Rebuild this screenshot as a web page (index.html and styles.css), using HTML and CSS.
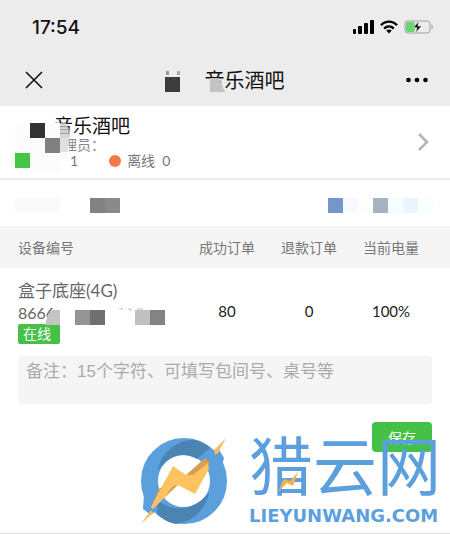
FILE: index.html
```html
<!DOCTYPE html>
<html lang="zh-CN">
<head>
    <meta charset="UTF-8">
    <meta name="viewport" content="width=device-width, initial-scale=1.0">
    <title>音乐酒吧</title>
    <link rel="stylesheet" href="styles.css">
</head>
<body>
    <header class="top">
        <div class="status-bar">
            <span class="time">17:54</span>
            <div class="status-icons">
                <svg width="22" height="14" viewBox="0 0 22 14">
                    <rect x="1" y="9" width="3" height="5" rx="1"/>
                    <rect x="6" y="6" width="4" height="8" rx="1"/>
                    <rect x="12" y="3" width="4" height="11" rx="1"/>
                    <rect x="18" y="0" width="4" height="14" rx="1"/>
                </svg>
                <svg width="18" height="14" viewBox="0 0 18 14">
                    <g fill="none" stroke="#000" stroke-width="2.4">
                        <path d="M1 5.2C5.5.4 12.5.4 17 5.2"/>
                        <path d="M4.2 8.6c2.8-2.8 6.8-2.8 9.6 0"/>
                    </g>
                    <path d="M6.3 10.6c1.6-1.4 3.8-1.4 5.4 0L9 13.6z"/>
                </svg>
                <svg width="30" height="14" viewBox="0 0 30 14">
                    <rect x="1" y="1" width="25" height="12" rx="3" fill="none" stroke="#a0a0a0"/>
                    <rect x="2" y="2" width="9" height="10" rx="2" fill="#6bd66f"/>
                    <path d="M27.5 4.5c1.7.7 1.7 4.300 0 5z" fill="#a0a0a0"/>
                    <path d="M15 1L9.500 7.700h3.600L11.500 13l6-6.900h-3.700z" stroke="#ececec" stroke-width=".6"/>
                </svg>
            </div>
        </div>
        <nav class="nav-bar">
            <button class="icon-btn" aria-label="关闭">
                <svg width="18" height="18" viewBox="0 0 18 18"><path d="M1 1l16 16M17 1L1 17" fill="none" stroke="#111" stroke-width="1.6"/></svg>
            </button>
            <h1>音乐酒吧
                <svg class="mosaic mosaic-nav" width="60" height="24" viewBox="0 0 60 24">
                    <rect x="1" y="2" width="3" height="4" fill="#999"/>
                    <rect x="12" y="2" width="3" height="4" fill="#aaa"/>
                    <rect x="0" y="8" width="15" height="15" fill="#3c3c3c"/>
                    <path d="M38 10h7v13h-7z" fill="#ececec"/>
                    <path d="M45 9h9l6 14H45z" fill="#c3c3c3"/>
                </svg>
            </h1>
            <button class="icon-btn" aria-label="更多">
                <svg width="22" height="6" viewBox="0 0 22 6"><circle cx="2.500" cy="3" r="2.300"/><circle cx="11" cy="3" r="2.300"/><circle cx="19.500" cy="3" r="2.300"/></svg>
            </button>
        </nav>
    </header>

    <main>
        <section class="venue">
            <div class="venue-info">
                <h2>音乐酒吧</h2>
                <p class="manager">管理员：</p>
                <p class="counts">
                    <span class="online">1</span>
                    <span class="dot"></span>
                    <span>离线&nbsp; 0</span>
                </p>
                <svg class="mosaic mosaic-venue" width="62" height="55" viewBox="0 0 62 55">
                    <path d="M0 7h45v15h8v9h1v13h-9v11H0z" fill="#fcfcfc"/>
                    <path d="M45 7h6l4 8v7H45z" fill="#ccc" opacity=".8"/>
                    <rect x="15" y="7" width="15" height="15" fill="#333"/>
                    <rect x="30" y="22" width="15" height="15" fill="#808080"/>
                    <rect x="45" y="22" width="8" height="14" fill="#e0e0e0"/>
                    <rect x="0" y="37" width="15" height="15" fill="#45c645"/>
                </svg>
            </div>
            <svg width="12" height="18" viewBox="0 0 12 18"><path d="M2 1l8 8-8 8" fill="none" stroke="#b5b5b5" stroke-width="2.500"/></svg>
        </section>

        <section class="hidden-row">
            <svg width="105" height="16" viewBox="0 0 105 16">
                <rect x="0" y="0" width="45" height="15" fill="#fafafa"/>
                <rect x="75" y="0" width="15" height="15" fill="#828282"/>
                <rect x="90" y="0" width="15" height="15" fill="#8a8a8a"/>
            </svg>
            <svg width="105" height="16" viewBox="0 0 105 16">
                <rect x="0" y="0" width="15" height="15" fill="#7397c6"/>
                <rect x="15" y="0" width="15" height="15" fill="#f8f8ff"/>
                <rect x="30" y="0" width="15" height="15" fill="#fcfffa"/>
                <rect x="45" y="0" width="15" height="15" fill="#a6b1c2"/>
                <rect x="60" y="0" width="15" height="15" fill="#f3feff"/>
                <rect x="75" y="0" width="15" height="15" fill="#e8f7ff"/>
                <rect x="90" y="0" width="15" height="15" fill="#f9fffd"/>
            </svg>
        </section>

        <table class="devices">
            <thead>
                <tr>
                    <th>设备编号</th>
                    <th>成功订单</th>
                    <th>退款订单</th>
                    <th>当前电量</th>
                </tr>
            </thead>
            <tbody>
                <tr>
                    <td>
                        <div class="device">
                            <div class="device-name">盒子底座(4G)</div>
                            <div class="device-id">8666</div>
                            <span class="badge">在线</span>
                            <svg class="mosaic mosaic-id" width="120" height="26" viewBox="0 0 120 26">
                                <path d="M3 6l4-4h8v15H0z" fill="#c4c4c4"/>
                                <rect x="15" y="0" width="15" height="17" fill="#fff"/>
                                <rect x="30" y="2" width="15" height="15" fill="#949494"/>
                                <rect x="45" y="2" width="15" height="15" fill="#707070"/>
                                <path d="M73 0h5l-2 2M83 1h3v2M92 1h6" fill="none" stroke="#bbb"/>
                                <rect x="90" y="2" width="15" height="15" fill="#c0c0c0"/>
                                <rect x="105" y="2" width="15" height="15" fill="#838383"/>
                            </svg>
                        </div>
                    </td>
                    <td>80</td>
                    <td>0</td>
                    <td>100%</td>
                </tr>
            </tbody>
        </table>

        <form class="remark">
            <textarea rows="1" aria-label="备注" placeholder="备注：15个字符、可填写包间号、桌号等"></textarea>
            <button class="save" type="button">保存</button>
        </form>
    </main>

    <div class="watermark">
        <svg width="86" height="88" viewBox="0 0 86 88">
            <circle cx="43" cy="43" r="34.500" fill="none" stroke="#5b9fdc" stroke-width="17"/>
            <path d="M3 57l-1 14 8 6 14-12zM77 10l6 10-3 11-12-5z" fill="#5b9fdc"/>
            <path d="M17 33C19 14 38 1 53 2c6 1 10 3 16 8L56 21C42 13 26 17 17 33z" fill="#4b83b3"/>
            <path d="M17 62c14 13 35 11 51-7-3 16-16 29-33 31-7-1-14-5-19-10z" fill="#4b83b3"/>
            <path d="M85 0L73 12l1 5 3-2zM0 86l10-14 2 3z" fill="#f4bd55"/>
            <path d="M45 37l19-17 5 5-18 14zM10 70l8-19 14-10 5 6-14 13z" fill="#d89f51"/>
            <path d="M32 28l13 9 7 0 15-12 1 6-14 25-17-9c-6-1-9 7-14 13l-11 11-2-2z" fill="#fdc361"/>
        </svg>
        <div class="watermark-text">
            <div class="watermark-name">猎云网
                <svg class="spark" width="22" height="20" viewBox="0 0 22 20"><path d="M21 0l-5 14-6-3L1 20 7 7l6 2z" fill="#f5b04d"/></svg>
            </div>
            <div class="watermark-site">LIEYUNWANG.COM</div>
        </div>
    </div>
</body>
</html>
```

FILE: styles.css
```css
* {
    box-sizing: border-box;
}
body {
    margin: 0;
    font-family: "Noto Sans CJK SC", sans-serif;
    background: #fff;
    color: #222;
    position: relative;
}
h1, h2, p {
    margin: 0;
    font-weight: normal;
}
button {
    font-family: inherit;
    border: 0;
    padding: 0;
}
svg {
    display: block;
    flex: none;
}
.mosaic {
    position: absolute;
}
.top {
    background: #ececec;
    color: #111;
}
.status-bar {
    display: flex;
    justify-content: space-between;
    align-items: center;
    height: 54px;
    padding: 0 16px 0 32px;
}
.time {
    font-family: Inter, sans-serif;
    font-size: 19px;
    font-weight: 500;
}
.status-icons {
    display: flex;
    gap: 6px;
}
.nav-bar {
    display: flex;
    justify-content: space-between;
    align-items: center;
    height: 52px;
    padding: 0 22px 0 25px;
}
.nav-bar h1 {
    position: relative;
    font-size: 20px;
    line-height: 28px;
    padding-left: 40px;
}
.mosaic-nav {
    left: 0;
    top: 3px;
}
.icon-btn {
    background: none;
}
.venue {
    display: flex;
    justify-content: space-between;
    align-items: center;
    padding: 8px 21px 8px 15px;
    border-bottom: 2px solid #ececec;
}
.venue-info {
    position: relative;
}
.venue h2 {
    font-size: 19px;
    line-height: 22px;
    color: #111;
    padding-left: 39px;
}
.manager {
    font-size: 14px;
    line-height: 16px;
    padding-left: 34px;
    color: #888;
}
.counts {
    display: flex;
    align-items: center;
    font-family: Lato, "Noto Sans CJK SC", sans-serif;
    font-size: 14px;
    line-height: 18px;
    color: #777;
    padding-left: 55px;
}
.dot {
    width: 12px;
    height: 12px;
    border-radius: 50%;
    background: #f5784a;
    margin: 0 6px 0 31px;
}
.mosaic-venue {
    left: 0;
    top: 2px;
}
.hidden-row {
    display: flex;
    justify-content: space-between;
    align-items: center;
    height: 46px;
    padding: 6px 17px 0 15px;
}
.devices {
    width: 100%;
    border-collapse: collapse;
    table-layout: fixed;
}
.devices th {
    height: 42px;
    padding: 0;
    background: #f5f5f5;
    color: #777;
    font-size: 14px;
    font-weight: normal;
    width: 82px;
}
.devices td {
    padding: 32px 0 0;
    text-align: center;
    vertical-align: top;
    font-family: Lato, "Noto Sans CJK SC", sans-serif;
    font-size: 15px;
    line-height: 22px;
}
.devices th:first-child {
    width: auto;
    text-align: left;
    padding-left: 18px;
}
.devices td:first-child {
    text-align: left;
    padding: 12px 0 12px 18px;
}
.devices th:last-child {
    width: 100px;
    padding-right: 18px;
}
.devices td:last-child {
    padding-right: 18px;
}
.device {
    position: relative;
    color: #666;
}
.device-name {
    font-size: 17px;
    line-height: 22px;
}
.device-id {
    font-size: 16px;
    line-height: 22px;
}
.badge {
    display: block;
    width: 42px;
    background: #45c148;
    color: #fff;
    font-size: 14px;
    line-height: 20px;
    padding-left: 5px;
    border-radius: 2px;
}
.mosaic-id {
    left: 27px;
    top: 28px;
}
.remark {
    display: flex;
    flex-direction: column;
    align-items: flex-end;
    gap: 18px;
    padding: 0 18px;
}
.remark textarea {
    width: 100%;
    height: 48px;
    padding: 4px 8px;
    border: 0;
    border-radius: 4px;
    background: #f5f5f5;
    font-family: "Liberation Sans", "Noto Sans CJK SC", sans-serif;
    font-size: 17px;
    line-height: 24px;
    resize: none;
}
.remark textarea::placeholder {
    color: #aaa;
}
.save {
    width: 60px;
    height: 30px;
    border-radius: 4px;
    background: #45c148;
    color: #fff;
    font-size: 14px;
}
main {
    padding-bottom: 81px;
    border-bottom: 1px solid #ddd;
}
.watermark {
    position: absolute;
    right: 9px;
    bottom: 8px;
    display: flex;
    align-items: flex-start;
    gap: 22px;
    color: #5b9fdc;
}
.watermark-name {
    position: relative;
    font-size: 64px;
    line-height: 48px;
}
.spark {
    position: absolute;
    left: 28px;
    top: 34px;
}
.watermark-site {
    margin-top: 20px;
    font-family: "DejaVu Sans", sans-serif;
    font-weight: bold;
    font-size: 18px;
    line-height: 20px;
}
```
